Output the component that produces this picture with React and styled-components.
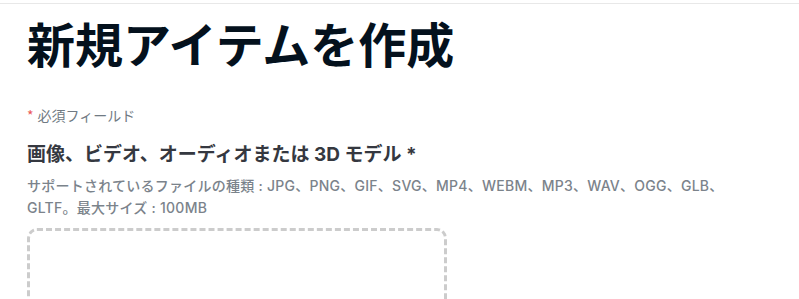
import React from 'react';
import styled, { createGlobalStyle } from 'styled-components';

const GlobalStyle = createGlobalStyle`
  html, body {
    margin: 0;
    padding: 0;
    background: #ffffff;
  }
  body {
    font-family: "Inter", "Noto Sans CJK JP", sans-serif;
    overflow: hidden;
  }
`;

const TopBar = styled.div`
  height: 3px;
  border-bottom: 1px solid #e8e8e8;
`;

const Page = styled.main`
  padding: 10px 27px 0 27px;
`;

const Title = styled.h1`
  margin: 0;
  font-family: "Noto Sans CJK JP", sans-serif;
  font-weight: 700;
  font-size: 48px;
  line-height: 56px;
  color: #04111d;
`;

const Required = styled.p`
  margin: 35px 0 0 0;
  font-family: "Noto Sans CJK JP", sans-serif;
  font-size: 14px;
  line-height: 20px;
  color: #707a83;

  span {
    color: #eb5757;
    margin-right: 4px;
  }
`;

const Label = styled.h2`
  margin: 17px 0 0 0;
  font-family: "Inter", "Noto Sans CJK JP", sans-serif;
  font-weight: 700;
  font-size: 19px;
  line-height: 26px;
  color: #353840;
`;

const Caption = styled.p`
  margin: 7px 0 0 0;
  max-width: 710px;
  font-family: "Inter", "Noto Sans CJK JP", sans-serif;
  font-weight: 500;
  font-size: 14px;
  letter-spacing: 0.25px;
  line-height: 22px;
  color: #7b838b;
`;

const DropZone = styled.div`
  margin-top: 9px;
  width: 420px;
  height: 260px;
  box-sizing: border-box;
  border: 3px dashed #cccccc;
  border-radius: 10px;
`;

export default function App() {
  return (
    <>
      <GlobalStyle />
      <TopBar />
      <Page>
        <Title>新規アイテムを作成</Title>
        <Required><span>*</span>必須フィールド</Required>
        <Label>画像、ビデオ、オーディオまたは 3D モデル *</Label>
        <Caption>
          サポートされているファイルの種類 : JPG、PNG、GIF、SVG、MP4、WEBM、MP3、WAV、OGG、GLB、GLTF。最大サイズ : 100MB
        </Caption>
        <DropZone />
      </Page>
    </>
  );
}
